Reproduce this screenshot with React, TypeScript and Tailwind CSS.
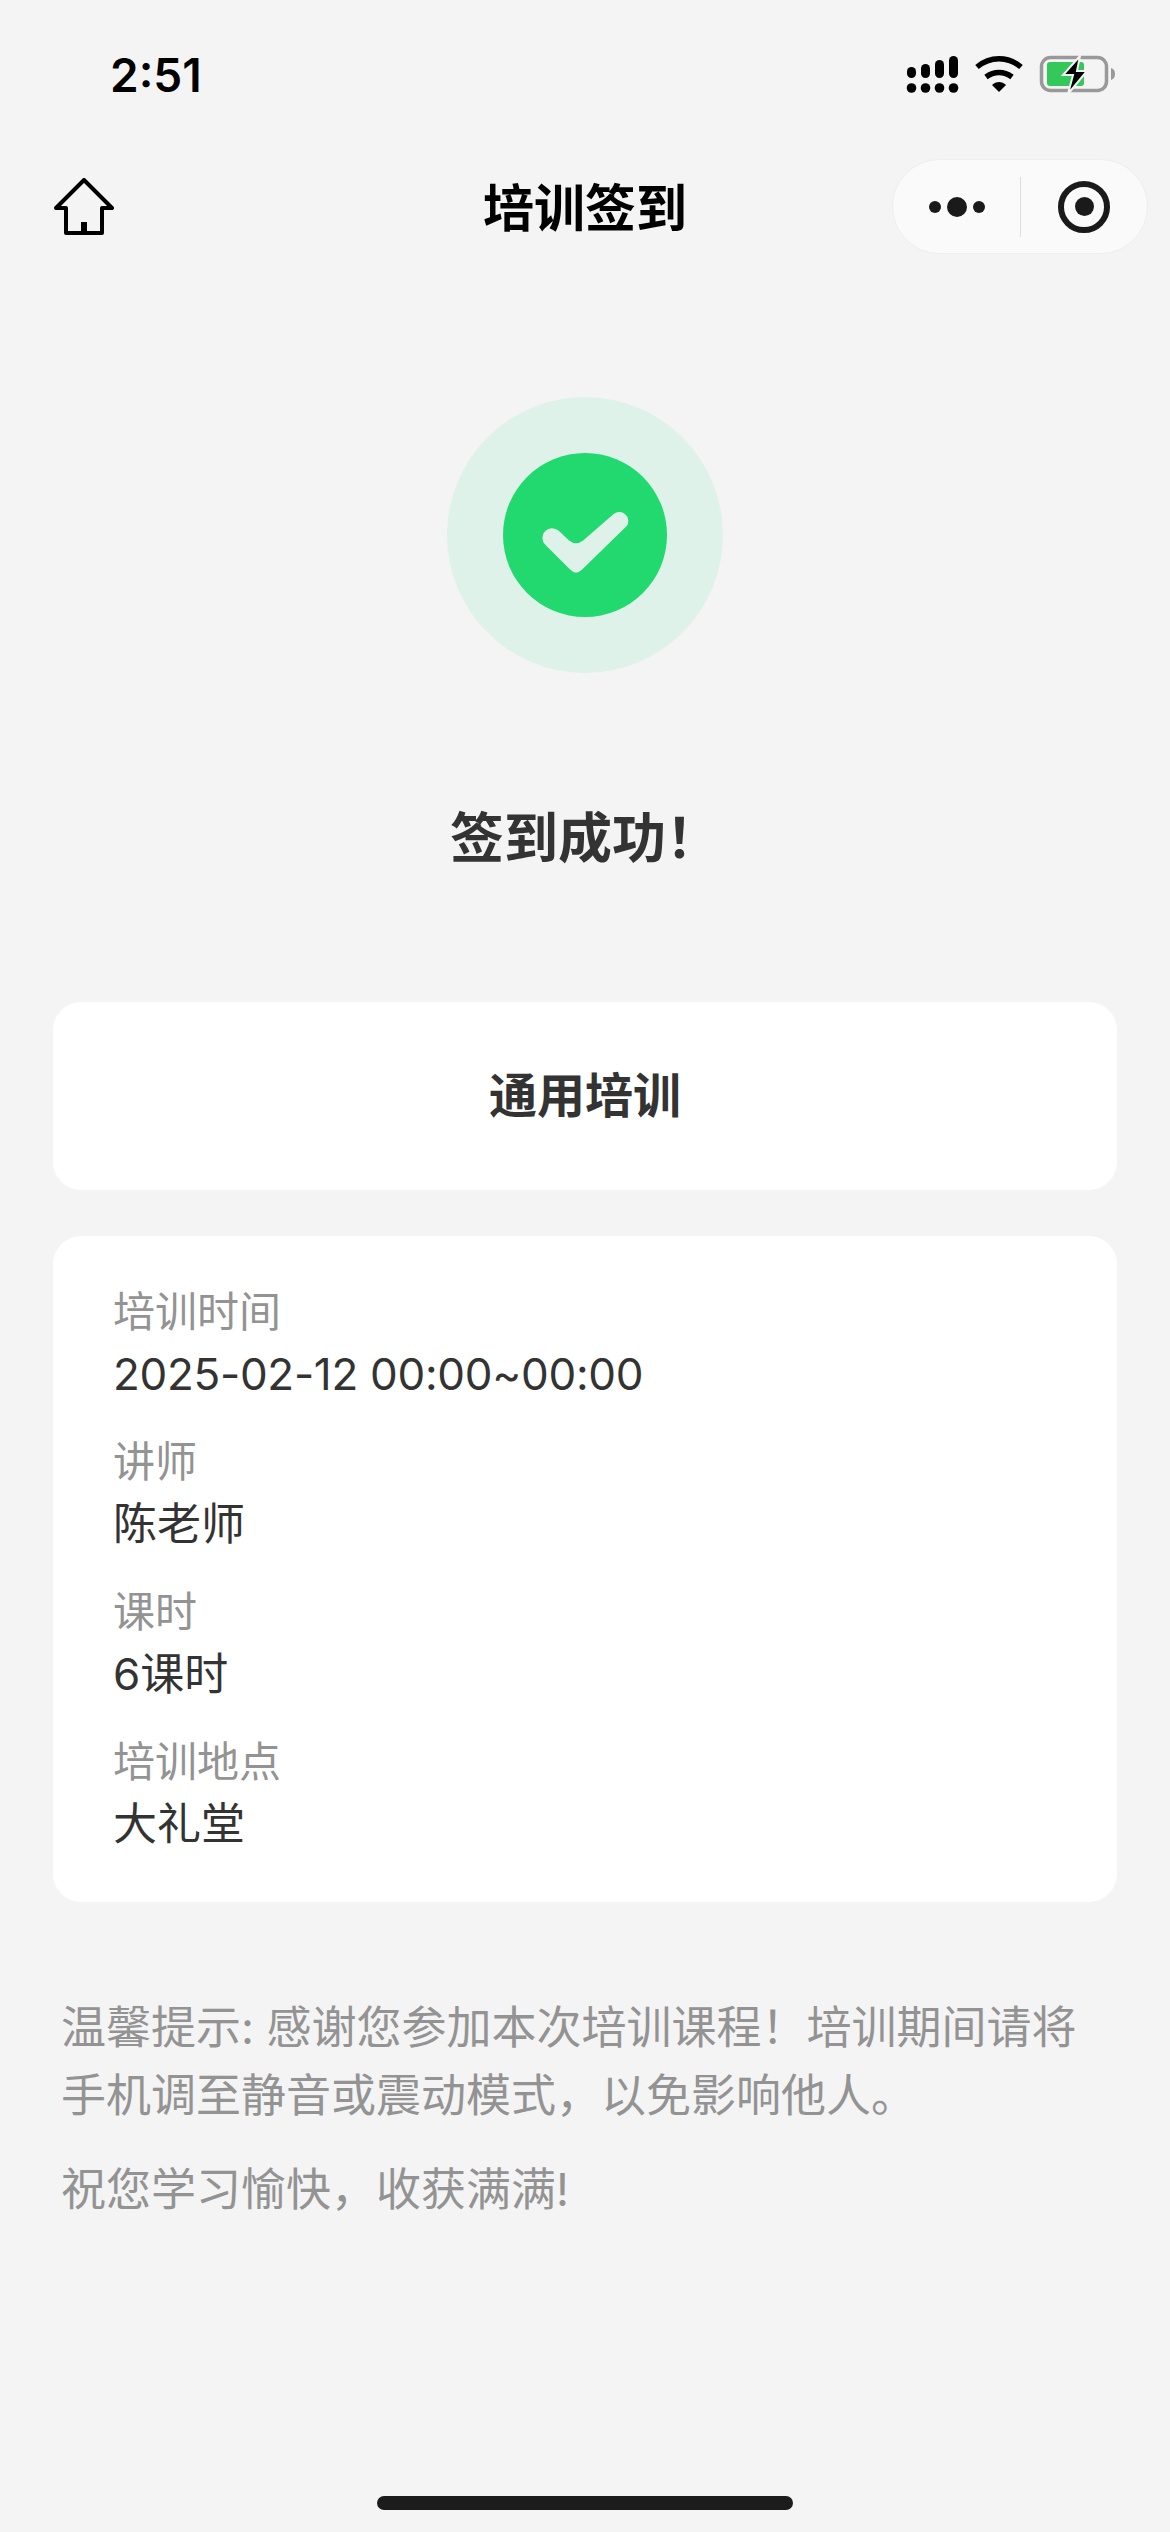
import React from 'react';

const cjk = "font-['Inter','Noto_Sans_CJK_SC',sans-serif]";

const details = [
  { label: '培训时间', value: '2025-02-12 00:00~00:00', valueClass: 'tracking-[-0.3px]' },
  { label: '讲师', value: '陈老师', valueClass: '' },
  { label: '课时', value: '6课时', valueClass: '' },
  { label: '培训地点', value: '大礼堂', valueClass: '' },
];

// drawn in page coordinates, viewBox is the crop of the status bar
const StatusIcons: React.FC = () => (
  <svg width="220" height="50" viewBox="900 50 220 50">
    <g fill="#000">
      <rect x="907" y="67" width="9" height="11" rx="4.5" />
      <rect x="921" y="64" width="9" height="14" rx="4.5" />
      <rect x="935" y="60" width="9" height="18" rx="4.5" />
      <rect x="949" y="56" width="9" height="22" rx="4.5" />
      <circle cx="911.5" cy="88" r="4.8" />
      <circle cx="925.5" cy="88" r="4.8" />
      <circle cx="939.5" cy="88" r="4.8" />
      <circle cx="953.5" cy="88" r="4.8" />
      <path d="M977 67 C990 56 1008 56 1021 67" fill="none" stroke="#000" strokeWidth="5.5" />
      <path d="M986 77 C994 71 1004 71 1012 77" fill="none" stroke="#000" strokeWidth="5.5" />
      <path d="M992 85 C996 81 1002 81 1006 85 L999 92 Z" />
    </g>
    <rect x="1041.5" y="57.5" width="65" height="33" rx="9" fill="none" stroke="#999" strokeWidth="3.5" />
    <path d="M1111 68 C1114 69 1115 71 1115 74 C1115 77 1114 79 1111 80 Z" fill="#999" />
    <rect x="1047" y="62" width="37" height="24" rx="3" fill="#34c759" />
    <path d="M1080 56 L1063 75 H1073 L1068 94 L1087 71 H1077 Z" fill="#000" stroke="#f4f4f4" strokeWidth="2" />
  </svg>
);

const HomeIcon: React.FC = () => (
  <svg width="60" height="58" viewBox="0 0 60 58" fill="none" stroke="#000" strokeWidth="4" strokeLinejoin="round" strokeLinecap="round">
    <path d="M2 30 L30 2 L58 30 H48 V55 H12 V30 Z" />
    <rect x="27" y="44" width="6" height="11" fill="#000" stroke="none" />
  </svg>
);

export default function App() {
  return (
    <div className={`w-[1170px] h-[2532px] bg-[#f4f4f4] flex flex-col ${cjk}`}>
      <div className="h-[150px] flex justify-between pt-[50px] pl-[110px] pr-[50px]">
        <span className="text-[46px] leading-[50px] font-semibold text-black font-['Inter',sans-serif]">2:51</span>
        <div>
          <StatusIcons />
        </div>
      </div>

      <div className="relative h-[116px] mt-[1px] flex items-center justify-center">
        <div className="absolute left-[54px] top-[27px]">
          <HomeIcon />
        </div>
        <span className="text-[51px] font-bold text-black">培训签到</span>
        <div className="absolute right-[22px] top-[8px] w-[256px] h-[95px] rounded-[48px] bg-[#fafafa] border border-[#eeeeee] flex items-center">
          <div className="w-[127px] flex justify-center items-center gap-[6px]">
            <span className="w-[12px] h-[12px] rounded-full bg-[#1a1a1a]" />
            <span className="w-[20px] h-[20px] rounded-full bg-[#1a1a1a]" />
            <span className="w-[12px] h-[12px] rounded-full bg-[#1a1a1a]" />
          </div>
          <div className="w-px h-[60px] bg-[#dddddd]" />
          <div className="flex-1 flex justify-center">
            <div className="w-[52px] h-[52px] rounded-full border-[6px] border-[#1a1a1a] flex items-center justify-center">
              <span className="w-[19px] h-[19px] rounded-full bg-[#1a1a1a]" />
            </div>
          </div>
        </div>
      </div>

      <div className="mt-[130px] flex justify-center">
        <div className="w-[276px] h-[276px] rounded-full bg-[#def2e9] flex items-center justify-center">
          <div className="w-[164px] h-[164px] rounded-full bg-[#22d970] flex items-center justify-center">
            <svg width="91" height="91" viewBox="360 330 272 272">
              <path
                d="M376 494 L450 568 Q468 586 486 568 L620 437 A27 27 0 0 0 580 402 L490 480 Q468 498 446 480 L416 452 A29 29 0 0 0 376 494 Z"
                fill="#def2e9"
              />
            </svg>
          </div>
        </div>
      </div>

      <div className="mt-[131px] text-center text-[54px] leading-[70px] font-bold text-[#333]">签到成功！</div>

      <div className="mt-[128px] mx-[53px] h-[188px] bg-white rounded-[28px] flex items-center justify-center text-[48px] font-bold text-[#333]">
        通用培训
      </div>

      <div className="mt-[46px] mx-[53px] h-[666px] bg-white rounded-[28px] px-[60px] pt-[46px] flex flex-col gap-[26px]">
        {details.map((d) => (
          <div key={d.label} className="flex flex-col">
            <span className="text-[42px] leading-[60px] text-[#939393]">{d.label}</span>
            <span className={`text-[44px] leading-[64px] text-[#333] ${d.valueClass}`}>{d.value}</span>
          </div>
        ))}
      </div>

      <div className="mt-[92px] ml-[61px] mr-[80px] text-[45px] leading-[68px] text-[#939393]">
        <p>温馨提示: 感谢您参加本次培训课程！培训期间请将手机调至静音或震动模式，以免影响他人。</p>
        <p className="mt-[26px]">祝您学习愉快，收获满满!</p>
      </div>

      <div className="mt-auto mb-[22px] mx-auto w-[416px] h-[14px] rounded-full bg-[#1c1c1c]" />
    </div>
  );
}
